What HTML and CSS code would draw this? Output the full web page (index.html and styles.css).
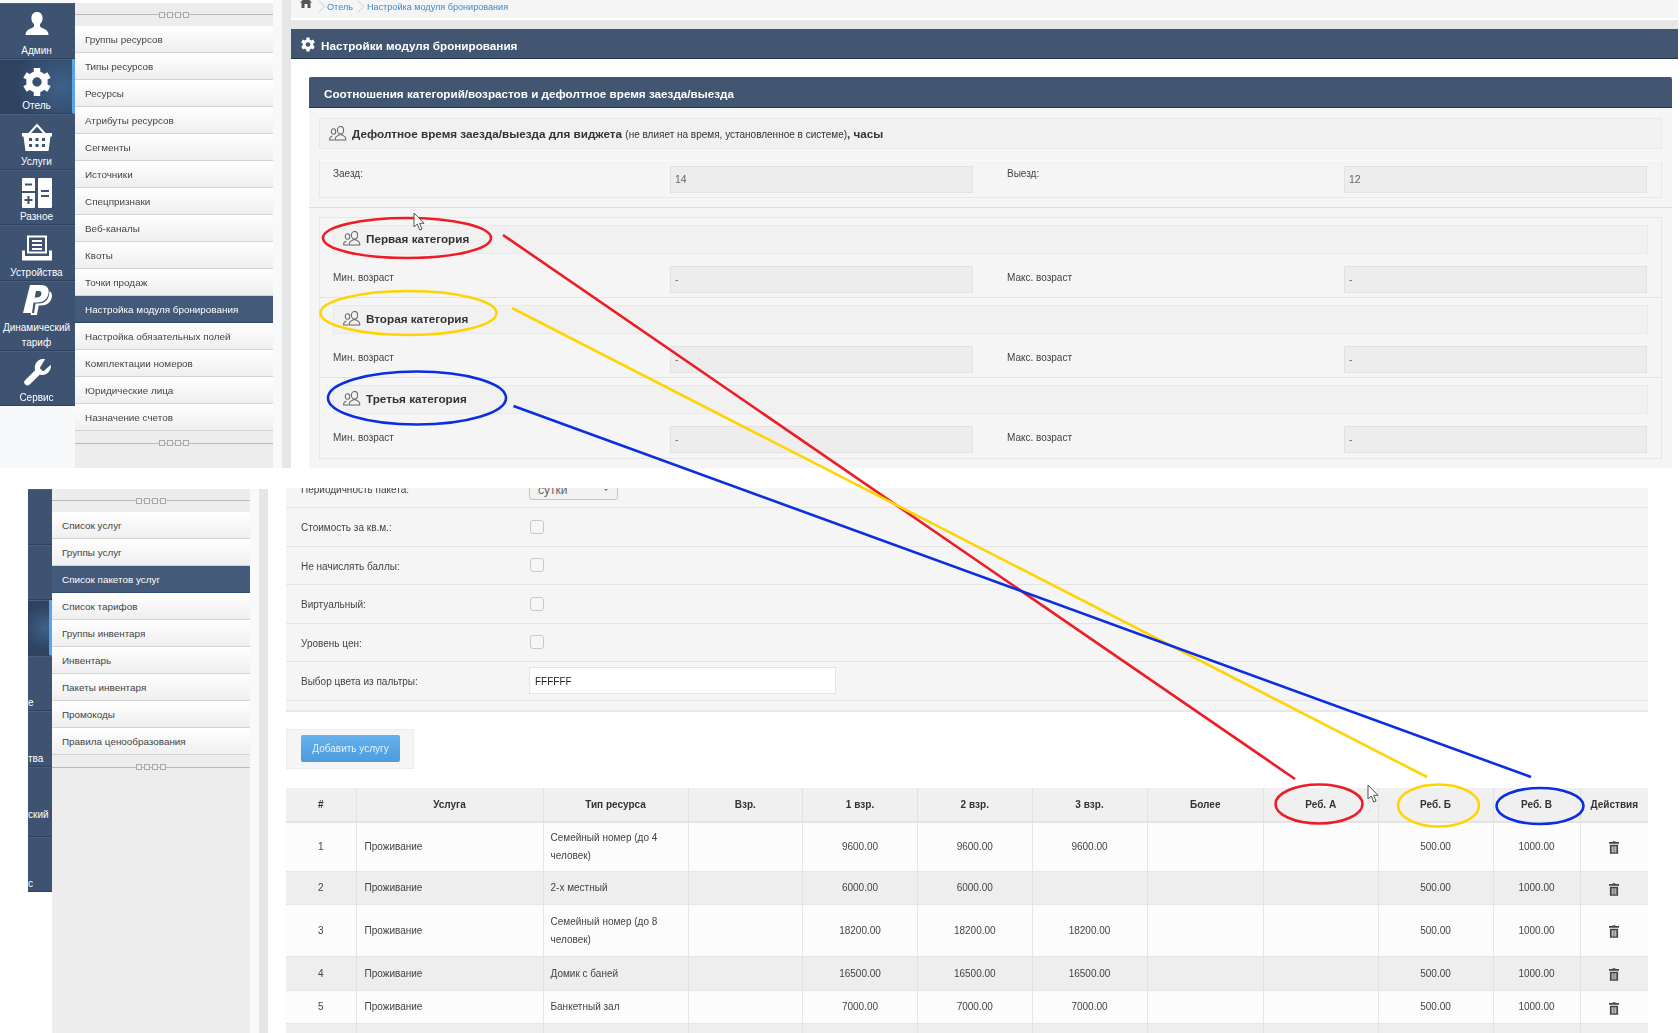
FILE: index.html
```html
<!DOCTYPE html>
<html>
<head>
  <meta charset="utf-8">
  <title>Настройки модуля бронирования</title>
  <link rel="stylesheet" href="styles.css">
</head>
<body>
  <svg class="sprites" width="0" height="0">
    <symbol id="i-user" viewBox="-3 -1 30 30"><path d="M12 0c-3.6 0-5.6 2.7-5.6 6.2 0 2.5 1 4.6 2.6 5.9v1.6c0 1-.8 1.6-2 2.2C4 17.200 .5 18.400 .5 23h23c0-4.600-3.500-5.800-6.500-7.100-1.200-.6-2-1.200-2-2.200v-1.600c1.600-1.300 2.600-3.400 2.600-5.900C17.600 2.700 15.600 0 12 0z"/></symbol>
    <symbol id="i-gear" viewBox="0 0 28 30"><circle cx="14" cy="15" r="7.700" fill="none" stroke="#fff" stroke-width="6"/><g stroke="#fff" stroke-width="6.500"><path d="M14 1v5"/><path d="M14 24v5"/><path d="M2 8l4.300 2.500"/><path d="M21.700 19.500L26 22"/><path d="M2 22l4.300-2.500"/><path d="M21.700 10.500L26 8"/></g></symbol>
    <symbol id="i-basket" viewBox="0 0 30 28"><path d="M6 12L15 2l9 10" fill="none" stroke="#fff" stroke-width="2"/><path fill-rule="evenodd" d="M0 10h30v3.500h-1.500L26.500 28h-23L1.500 13.500H0zM7 15v3h3v-3zM13.500 15v3h3v-3zM20 15v3h3v-3zM7 21v3h3v-3zM13.500 21v3h3v-3zM20 21v3h3v-3z"/></symbol>
    <symbol id="i-calc" viewBox="0 0 30 30"><path fill-rule="evenodd" d="M1 0h11a1 1 0 0 1 1 1v12H0V1a1 1 0 0 1 1-1zM3 5.500v2h7v-2zM0 15h13v14a1 1 0 0 1-1 1H1a1 1 0 0 1-1-1zM5.500 18v3H2.500v2h3v3h2v-3h3v-2h-3v-3zM17 0h12a1 1 0 0 1 1 1v28a1 1 0 0 1-1 1H17a1 1 0 0 1-1-1V1a1 1 0 0 1 1-1zM19 12v2h8v-2zM19 17v2h8v-2z"/></symbol>
    <symbol id="i-doc" viewBox="0 0 30 25"><path fill-rule="evenodd" d="M5 0h20v18H5zM7 2v14h16V2zM10 4.500h10v2H10zM10 8.500h10v2H10zM10 12.500h10v2H10zM0 15h3v5.500h24V15h3v10H0z"/></symbol>
    <symbol id="i-pp" viewBox="0 0 30 30"><path fill-rule="evenodd" d="M8 0h11c6 0 8.500 3.500 7.500 8.500-1.200 6-5.500 9-11.500 9h-3.500L10 28H1zM14 6l-1.300 6.500H15c2.500 0 4-1.200 4.400-3.500C19.800 7 18.800 6 16.500 6z"/><path d="M27.500 6c2.500 1.500 2.800 4.300 2.200 6.800-1.300 5.200-5.300 7.700-10.700 7.700h-2.300L15 30H8.500l.5-2h3l1.600-9.500h3c5.200 0 9.600-3 10.500-9z"/></symbol>
    <symbol id="i-tool" viewBox="0 0 24 24"><path d="M14.700 6.300a1 1 0 0 0 0 1.400l1.600 1.600a1 1 0 0 0 1.400 0l5.300-4.800a7 7 0 0 1-8.900 8l-7.900 7.900a2.500 2.500 0 0 1-3.600-3.600l7.900-7.900a7 7 0 0 1 8-8.900z"/></symbol>
    <symbol id="i-people" viewBox="0 0 18 15"><g fill="none" stroke="#666" stroke-width="1.050"><ellipse cx="11.500" cy="4.200" rx="3.100" ry="3.700"/><path d="M6.300 14v-1.700c0-1.800 2.500-2.500 3.700-3.500h3c1.200 1 3.700 1.700 3.700 3.500V14z"/><ellipse cx="4.500" cy="5.500" rx="2.200" ry="2.800"/><path d="M5.500 14H.7v-1.500c0-1.300 1.700-1.900 2.500-2.500"/></g></symbol>
    <symbol id="i-trash" viewBox="0 0 11 14"><path d="M4 0h3v1h4v2H0V1h4zM1 4h9v10H1zM3 5.500v7h1v-7zM5 5.500v7h1v-7zM7 5.500v7h1v-7z" fill-rule="evenodd"/></symbol>
    <symbol id="i-cursor" viewBox="0 0 13 19"><path d="M1 1v14l3.300-3 2.400 6 2.300-1-2.400-5.700H11z" fill="#fff" stroke="#555" stroke-width="1"/></symbol>
  </svg>

  <div class="page">
    <section class="shot shot-top">
      <div class="side-col">
        <nav class="nav">
          <a class="nav-item"><svg class="nav-icon"><use href="#i-user"/></svg>Админ</a>
          <a class="nav-item active"><svg class="nav-icon"><use href="#i-gear"/></svg>Отель</a>
          <a class="nav-item"><svg class="nav-icon"><use href="#i-basket"/></svg>Услуги</a>
          <a class="nav-item"><svg class="nav-icon"><use href="#i-calc"/></svg>Разное</a>
          <a class="nav-item"><svg class="nav-icon"><use href="#i-doc"/></svg>Устройства</a>
          <a class="nav-item tall"><svg class="nav-icon"><use href="#i-pp"/></svg>Динамический<br>тариф</a>
          <a class="nav-item"><svg class="nav-icon"><use href="#i-tool"/></svg>Сервис</a>
        </nav>
      </div>
      <div class="submenu">
        <div class="handle"><span></span><span></span><span></span><span></span></div>
        <ul class="sublist">
          <li>Группы ресурсов</li>
          <li>Типы ресурсов</li>
          <li>Ресурсы</li>
          <li>Атрибуты ресурсов</li>
          <li>Сегменты</li>
          <li>Источники</li>
          <li>Спецпризнаки</li>
          <li>Веб-каналы</li>
          <li>Квоты</li>
          <li>Точки продаж</li>
          <li class="current">Настройка модуля бронирования</li>
          <li>Настройка обязательных полей</li>
          <li>Комплектации номеров</li>
          <li>Юридические лица</li>
          <li>Назначение счетов</li>
        </ul>
        <div class="handle"><span></span><span></span><span></span><span></span></div>
      </div>
      <div class="gutter"></div>
      <div class="strip"></div>
      <main class="main">
        <div class="crumbs">
          <svg class="home" viewBox="0 0 12 11"><path d="M6 0l6 5.500h-1.500V11H7.500V7h-3v4H1.500V5.500H0z"/></svg>
          <i class="sep"></i><a>Отель</a><i class="sep"></i><a>Настройка модуля бронирования</a>
        </div>
        <div class="texture"></div>
        <h1 class="title-bar"><svg class="title-gear"><use href="#i-gear"/></svg>Настройки модуля бронирования</h1>
        <div class="panel">
          <h2 class="panel-head">Соотношения категорий/возрастов и дефолтное время заезда/выезда</h2>
          <div class="panel-body">
            <div class="group-head wide">
              <svg class="people"><use href="#i-people"/></svg>
              <span>Дефолтное время заезда/выезда для виджета <small>(не влияет на время, установленное в системе)</small>, часы</span>
            </div>
            <div class="fields time-row">
              <label class="top">Заезд:</label><div class="fake-input">14</div>
              <label class="top right-label">Выезд:</label><div class="fake-input">12</div>
            </div>
            <hr class="rule">
            <div class="cats">
              <div class="cat">
                <div class="group-head"><svg class="people"><use href="#i-people"/></svg><span>Первая категория</span></div>
                <div class="fields">
                  <label>Мин. возраст</label><div class="fake-input">-</div>
                  <label class="right-label">Макс. возраст</label><div class="fake-input">-</div>
                </div>
              </div>
              <div class="cat">
                <div class="group-head"><svg class="people"><use href="#i-people"/></svg><span>Вторая категория</span></div>
                <div class="fields">
                  <label>Мин. возраст</label><div class="fake-input">-</div>
                  <label class="right-label">Макс. возраст</label><div class="fake-input">-</div>
                </div>
              </div>
              <div class="cat">
                <div class="group-head"><svg class="people"><use href="#i-people"/></svg><span>Третья категория</span></div>
                <div class="fields">
                  <label>Мин. возраст</label><div class="fake-input">-</div>
                  <label class="right-label">Макс. возраст</label><div class="fake-input">-</div>
                </div>
              </div>
            </div>
          </div>
        </div>
      </main>
    </section>

    <section class="shot shot-bottom">
      <div class="side-col stub-col">
        <nav class="nav stub-nav">
          <a class="nav-item"></a>
          <a class="nav-item"></a>
          <a class="nav-item active"></a>
          <a class="nav-item"><i class="stub"></i>е</a>
          <a class="nav-item"><i class="stub"></i>тва</a>
          <a class="nav-item tall"><i class="stub tall-stub"></i>ский</a>
          <a class="nav-item"><i class="stub"></i>с</a>
        </nav>
      </div>
      <div class="submenu">
        <div class="handle"><span></span><span></span><span></span><span></span></div>
        <ul class="sublist">
          <li>Список услуг</li>
          <li>Группы услуг</li>
          <li class="current">Список пакетов услуг</li>
          <li>Список тарифов</li>
          <li>Группы инвентаря</li>
          <li>Инвентарь</li>
          <li>Пакеты инвентаря</li>
          <li>Промокоды</li>
          <li>Правила ценообразования</li>
        </ul>
        <div class="handle"><span></span><span></span><span></span><span></span></div>
      </div>
      <div class="gutter"></div>
      <div class="strip"></div>
      <main class="main lower">
        <div class="form-box">
          <div class="form-row clipped-row"><label>Периодичность пакета:</label><div class="select">сутки<i></i></div></div>
          <div class="form-row"><label>Стоимость за кв.м.:</label><span class="check"></span></div>
          <div class="form-row"><label>Не начислять баллы:</label><span class="check"></span></div>
          <div class="form-row"><label>Виртуальный:</label><span class="check"></span></div>
          <div class="form-row"><label>Уровень цен:</label><span class="check"></span></div>
          <div class="form-row"><label>Выбор цвета из пальтры:</label><div class="color-input">FFFFFF</div></div>
        </div>
        <div class="add-box"><button class="add-btn">Добавить услугу</button></div>
        <table class="prices">
          <colgroup>
            <col class="c-num"><col class="c-name"><col class="c-type"><col class="c-114"><col class="c-115"><col class="c-114">
            <col class="c-115"><col class="c-116"><col class="c-114"><col class="c-115"><col class="c-87"><col class="c-act">
          </colgroup>
          <thead>
            <tr><th>#</th><th>Услуга</th><th>Тип ресурса</th><th>Взр.</th><th>1 взр.</th><th>2 взр.</th><th>3 взр.</th><th>Более</th><th>Реб. А</th><th>Реб. Б</th><th>Реб. В</th><th>Действия</th></tr>
          </thead>
          <tbody>
            <tr class="r-tall"><td>1</td><td class="tl">Проживание</td><td class="tl">Семейный номер (до 4 человек)</td><td></td><td>9600.00</td><td>9600.00</td><td>9600.00</td><td></td><td></td><td>500.00</td><td>1000.00</td><td><svg class="trash"><use href="#i-trash"/></svg></td></tr>
            <tr class="r-last"><td>2</td><td class="tl">Проживание</td><td class="tl">2-х местный</td><td></td><td>6000.00</td><td>6000.00</td><td></td><td></td><td></td><td>500.00</td><td>1000.00</td><td><svg class="trash"><use href="#i-trash"/></svg></td></tr>
            <tr class="r-taller"><td>3</td><td class="tl">Проживание</td><td class="tl">Семейный номер (до 8 человек)</td><td></td><td>18200.00</td><td>18200.00</td><td>18200.00</td><td></td><td></td><td>500.00</td><td>1000.00</td><td><svg class="trash"><use href="#i-trash"/></svg></td></tr>
            <tr class="r-short"><td>4</td><td class="tl">Проживание</td><td class="tl">Домик с баней</td><td></td><td>16500.00</td><td>16500.00</td><td>16500.00</td><td></td><td></td><td>500.00</td><td>1000.00</td><td><svg class="trash"><use href="#i-trash"/></svg></td></tr>
            <tr class="r-last"><td>5</td><td class="tl">Проживание</td><td class="tl">Банкетный зал</td><td></td><td>7000.00</td><td>7000.00</td><td>7000.00</td><td></td><td></td><td>500.00</td><td>1000.00</td><td><svg class="trash"><use href="#i-trash"/></svg></td></tr>
            <tr class="r-last"><td></td><td></td><td></td><td></td><td></td><td></td><td></td><td></td><td></td><td></td><td></td><td></td></tr>
          </tbody>
        </table>
      </main>
    </section>

    <!-- красные, жёлтые и синие пометки поверх скриншотов -->
    <svg class="marks" viewBox="0 0 1680 1033">
      <g fill="none" stroke-width="2.600">
        <g stroke="#ee1c25">
          <ellipse cx="407" cy="238" rx="84" ry="20"/>
          <path d="M503 235L1295 779"/>
          <ellipse cx="1319" cy="804" rx="43.500" ry="19.500"/>
        </g>
        <g stroke="#ffd400">
          <ellipse cx="408.500" cy="313" rx="88" ry="22"/>
          <path d="M512 308L1427 777"/>
          <ellipse cx="1438.500" cy="805.500" rx="40.500" ry="21"/>
        </g>
        <g stroke="#0a2fe0">
          <ellipse cx="417" cy="398" rx="89" ry="26.500"/>
          <path d="M513.500 406L1531 777"/>
          <ellipse cx="1540" cy="806" rx="43.500" ry="18"/>
        </g>
      </g>
      <use href="#i-cursor" x="413" y="212" width="13" height="19"/>
      <use href="#i-cursor" x="1367" y="784" width="13" height="19"/>
    </svg>
  </div>
</body>
</html>
```

FILE: styles.css
```css
html, body {
  margin: 0;
  padding: 0;
  background: #fff;
}

body {
  font-family: "Liberation Sans", Arial, sans-serif;
  font-size: 10px;
  color: #444;
}

.sprites {
  position: absolute;
}

.page {
  position: relative;
  width: 1680px;
  height: 1033px;
  overflow: hidden;
  filter: blur(0.45px);
}

.shot {
  display: flex;
  overflow: hidden;
}

.shot-top {
  height: 468px;
  margin-bottom: 20px;
}

.shot-bottom {
  height: 545px;
  padding-left: 28px;
  padding-top: 1px;
}

/* левая тёмная колонка */
.side-col {
  width: 75px;
  flex: none;
  padding-top: 3px;
  background: #f8f9fb;
}

.side-col.stub-col {
  width: 24px;
  padding-top: 0;
  background: #fff;
}

.nav {
  width: 75px;
  background: #3e5272;
}

.stub-nav {
  width: 24px;
}

.nav-item {
  display: flex;
  flex-direction: column;
  align-items: center;
  box-sizing: border-box;
  height: 55.500px;
  padding: 8px 2px 0 0;
  color: #fff;
  font-size: 10px;
  line-height: 15px;
  text-align: center;
  border-bottom: 1px solid #2f4260;
  box-shadow: inset 0 1px 0 #4a5f80;
}

.nav-item.tall {
  height: 70px;
  padding-top: 4px;
}

.nav-item.tall .nav-icon {
  margin-bottom: 5px;
}

.nav-item.active {
  background: radial-gradient(circle at 85% 50%, #3f6189, #2f4361 70%);
  border-right: 3px solid #5aa5e8;
  padding: 8px 0 0 1px;
}

.stub-nav .nav-item {
  align-items: flex-start;
}

.stub {
  display: block;
  height: 32px;
}

.stub.tall-stub {
  height: 36px;
}

.nav-icon {
  width: 30px;
  height: 30px;
  fill: #fff;
  flex: none;
  margin-bottom: 1.500px;
}

/* подменю */
.submenu {
  width: 198px;
  flex: none;
  background: #ededed;
  margin-top: 3px;
}

.shot-bottom .submenu {
  margin-top: 0;
}

.handle {
  height: 23px;
  display: flex;
  align-items: center;
  justify-content: center;
  gap: 2px;
  background: linear-gradient(#b9b9b9, #b9b9b9) center / 100% 1px no-repeat;
}

.handle span {
  width: 4px;
  height: 4px;
  border: 1px solid #aaa;
  background: #eee;
}

.submenu .handle:last-child {
  height: 24px;
}

.sublist {
  list-style: none;
  margin: 0;
  padding: 0;
}

.sublist li {
  box-sizing: border-box;
  height: 27px;
  padding: 1px 0 0 10px;
  font-size: 9.900px;
  line-height: 26px;
  color: #444;
  background: linear-gradient(#ffffff, #efefef);
  border-bottom: 1px solid #d4d4d4;
}

.sublist li.current {
  background: #445a7a;
  color: #fff;
  border-bottom: 1px solid #2f4a70;
}

.gutter {
  width: 9px;
  flex: none;
  background: #f7f9fb;
}

.strip {
  width: 9px;
  flex: none;
  background: #e6e6e6;
}

/* основная часть, верхний снимок */
.main {
  flex: 1;
  min-width: 0;
  padding-right: 2px;
}

.crumbs {
  display: flex;
  align-items: flex-start;
  height: 18px;
  padding-top: 2px;
  padding-left: 9px;
  margin-bottom: 2px;
  box-sizing: border-box;
  background: #f5f5f5;
  font-size: 9.100px;
  line-height: 11px;
  color: #3d8ac9;
  overflow: hidden;
}

.home {
  width: 12px;
  height: 13px;
  margin-top: -6px;
  fill: #555;
}

.sep {
  width: 6px;
  height: 6px;
  margin: 1px 4px 0 4px;
  border-top: 1px solid #ddd;
  border-right: 1px solid #ddd;
  transform: rotate(45deg) scale(1.2);
}

.crumbs a + .sep {
  margin: 1px 5px 0 2px;
}

.texture {
  height: 9px;
  background: #e7e7e7;
}

.title-bar {
  display: flex;
  align-items: center;
  height: 30px;
  margin: 0;
  padding: 3px 0 0 10px;
  background: #425571;
  border-bottom: 1px solid #22344f;
  box-sizing: border-box;
  color: #fff;
  font-size: 11.700px;
  font-weight: bold;
}

.title-gear {
  width: 14px;
  height: 15px;
  margin: -2px 6px 0 0;
}

.panel {
  margin: 18px 6px 0 18px;
  background: #f5f5f5;
}

.panel-head {
  height: 31px;
  margin: 0;
  padding: 2px 0 0 15px;
  box-sizing: border-box;
  background: #425571;
  border-bottom: 1px solid #22344f;
  border-radius: 2px 2px 0 0;
  color: #fff;
  font-size: 11.700px;
  font-weight: bold;
  line-height: 29px;
}

.panel-body {
  padding: 10px 10px 20px;
}

.group-head {
  display: flex;
  align-items: center;
  height: 29px;
  padding-left: 9px;
  background: #f1f1f1;
  border: 1px solid #e9e9e9;
  box-sizing: border-box;
  color: #333;
  font-size: 11.700px;
  font-weight: bold;
}

.group-head.wide {
  height: 31px;
}

.group-head small {
  font-size: 10px;
  font-weight: normal;
}

.people {
  width: 18px;
  height: 15px;
  margin-right: 5px;
  flex: none;
}

.fields {
  display: grid;
  grid-template-columns: 337px 303px 371px 303px;
  align-items: center;
  margin-top: 12px;
}

.fields label {
  margin-top: -5px;
  font-size: 10px;
  color: #444;
}

.fields .right-label {
  padding-left: 34px;
}

.fake-input {
  box-sizing: border-box;
  height: 27px;
  line-height: 25px;
  padding-left: 4px;
  background: #ededed;
  border: 1px solid #e2e2e2;
  color: #666;
  font-size: 10.500px;
}

.time-row {
  height: 38px;
  margin-top: 11px;
  padding: 0 13px;
  box-sizing: border-box;
  border: 1px solid #e8e8e8;
  border-top-color: #fbfbfb;
}

.time-row label.top {
  margin-top: -11px;
}

.rule {
  height: 0;
  margin: 9px -10px;
  border: 0;
  border-top: 1px solid #dcdcdc;
}

.cats {
  border: 1px solid #e6e6e6;
}

.cat {
  box-sizing: border-box;
  height: 80px;
  padding: 7px 13px 0;
  border-bottom: 1px solid #e3e3e3;
}

.cat:last-child {
  border-bottom: 0;
}

.cat .group-head {
  padding: 0 0 3px 9px;
}

/* нижний снимок */
.lower {
  padding-left: 18px;
  padding-right: 32px;
}

.form-box {
  background: #f5f5f5;
  border-bottom: 2px solid #e8e8e8;
  padding-bottom: 9px;
}

.form-row {
  display: flex;
  align-items: center;
  box-sizing: border-box;
  height: 38.500px;
  padding-left: 15px;
  border-bottom: 1px solid #e4e4e4;
}

.form-row label {
  width: 228px;
  padding-top: 2px;
  font-size: 10px;
  color: #444;
}

.clipped-row {
  height: 38px;
  margin-top: -19px;
}

.select {
  position: relative;
  box-sizing: border-box;
  width: 89px;
  height: 22px;
  margin-top: 1px;
  padding-left: 8px;
  line-height: 22px;
  font-size: 12px;
  color: #666;
  background: #f2f2f2;
  border: 1px solid #c4c4c4;
  border-radius: 3px;
}

.select i {
  position: absolute;
  right: 9px;
  top: 10px;
  border: 2.500px solid transparent;
  border-top-color: #777;
}

.check {
  box-sizing: border-box;
  width: 14px;
  height: 14px;
  margin-left: 1px;
  background: #f6f6f6;
  border: 1px solid #c9c9c9;
  border-radius: 3px;
}

.color-input {
  box-sizing: border-box;
  width: 307px;
  height: 27px;
  padding-left: 5px;
  line-height: 27px;
  font-size: 10px;
  color: #222;
  background: #fff;
  border: 1px solid #e4e4e4;
}

.add-box {
  box-sizing: border-box;
  width: 128px;
  height: 40px;
  margin-top: 17px;
  padding: 5px 14px;
  background: #f5f5f5;
  border: 1px solid #ececec;
}

.add-btn {
  display: block;
  width: 99px;
  height: 27px;
  padding: 0;
  background: linear-gradient(#65b2ee, #4e9bdd);
  border: 0;
  border-radius: 2px;
  font-family: inherit;
  font-size: 10px;
  color: #e4f1fb;
}

.prices {
  width: 1362px;
  margin-top: 19px;
  table-layout: fixed;
  border-collapse: collapse;
  font-size: 10px;
}

.c-num { width: 70px; }
.c-name { width: 187px; }
.c-type { width: 145px; }
.c-114 { width: 114.500px; }
.c-115 { width: 115px; }
.c-116 { width: 116.500px; }
.c-87 { width: 87px; }
.c-act { width: 68px; }

.prices th {
  height: 33px;
  padding: 0;
  background: #f0f0f0;
  border-left: 1px solid #e2e2e2;
  border-bottom: 2px solid #e4e4e4;
  font-weight: bold;
  color: #333;
}

.prices td {
  padding: 0 8px;
  text-align: center;
  line-height: 18px;
  background: #fcfcfc;
  border-left: 1px solid #e6e6e6;
  border-bottom: 1px solid #e6e6e6;
}

.prices th:first-child,
.prices td:first-child {
  border-left: 0;
}

.prices td.tl {
  text-align: left;
}

.prices td:nth-child(3) {
  padding-left: 7px;
}

.r-tall {
  height: 50px;
}

.r-taller {
  height: 52px;
}

.r-short {
  height: 34px;
}

.r-last {
  height: 33px;
}

.prices tbody tr:nth-child(even) td {
  background: #eeeeee;
  border-left-color: #e2e2e2;
}

.trash {
  display: block;
  width: 10px;
  height: 13px;
  margin: 2px auto 0;
  fill: #444;
}

.marks {
  position: absolute;
  left: 0;
  top: 0;
  width: 1680px;
  height: 1033px;
}
```
